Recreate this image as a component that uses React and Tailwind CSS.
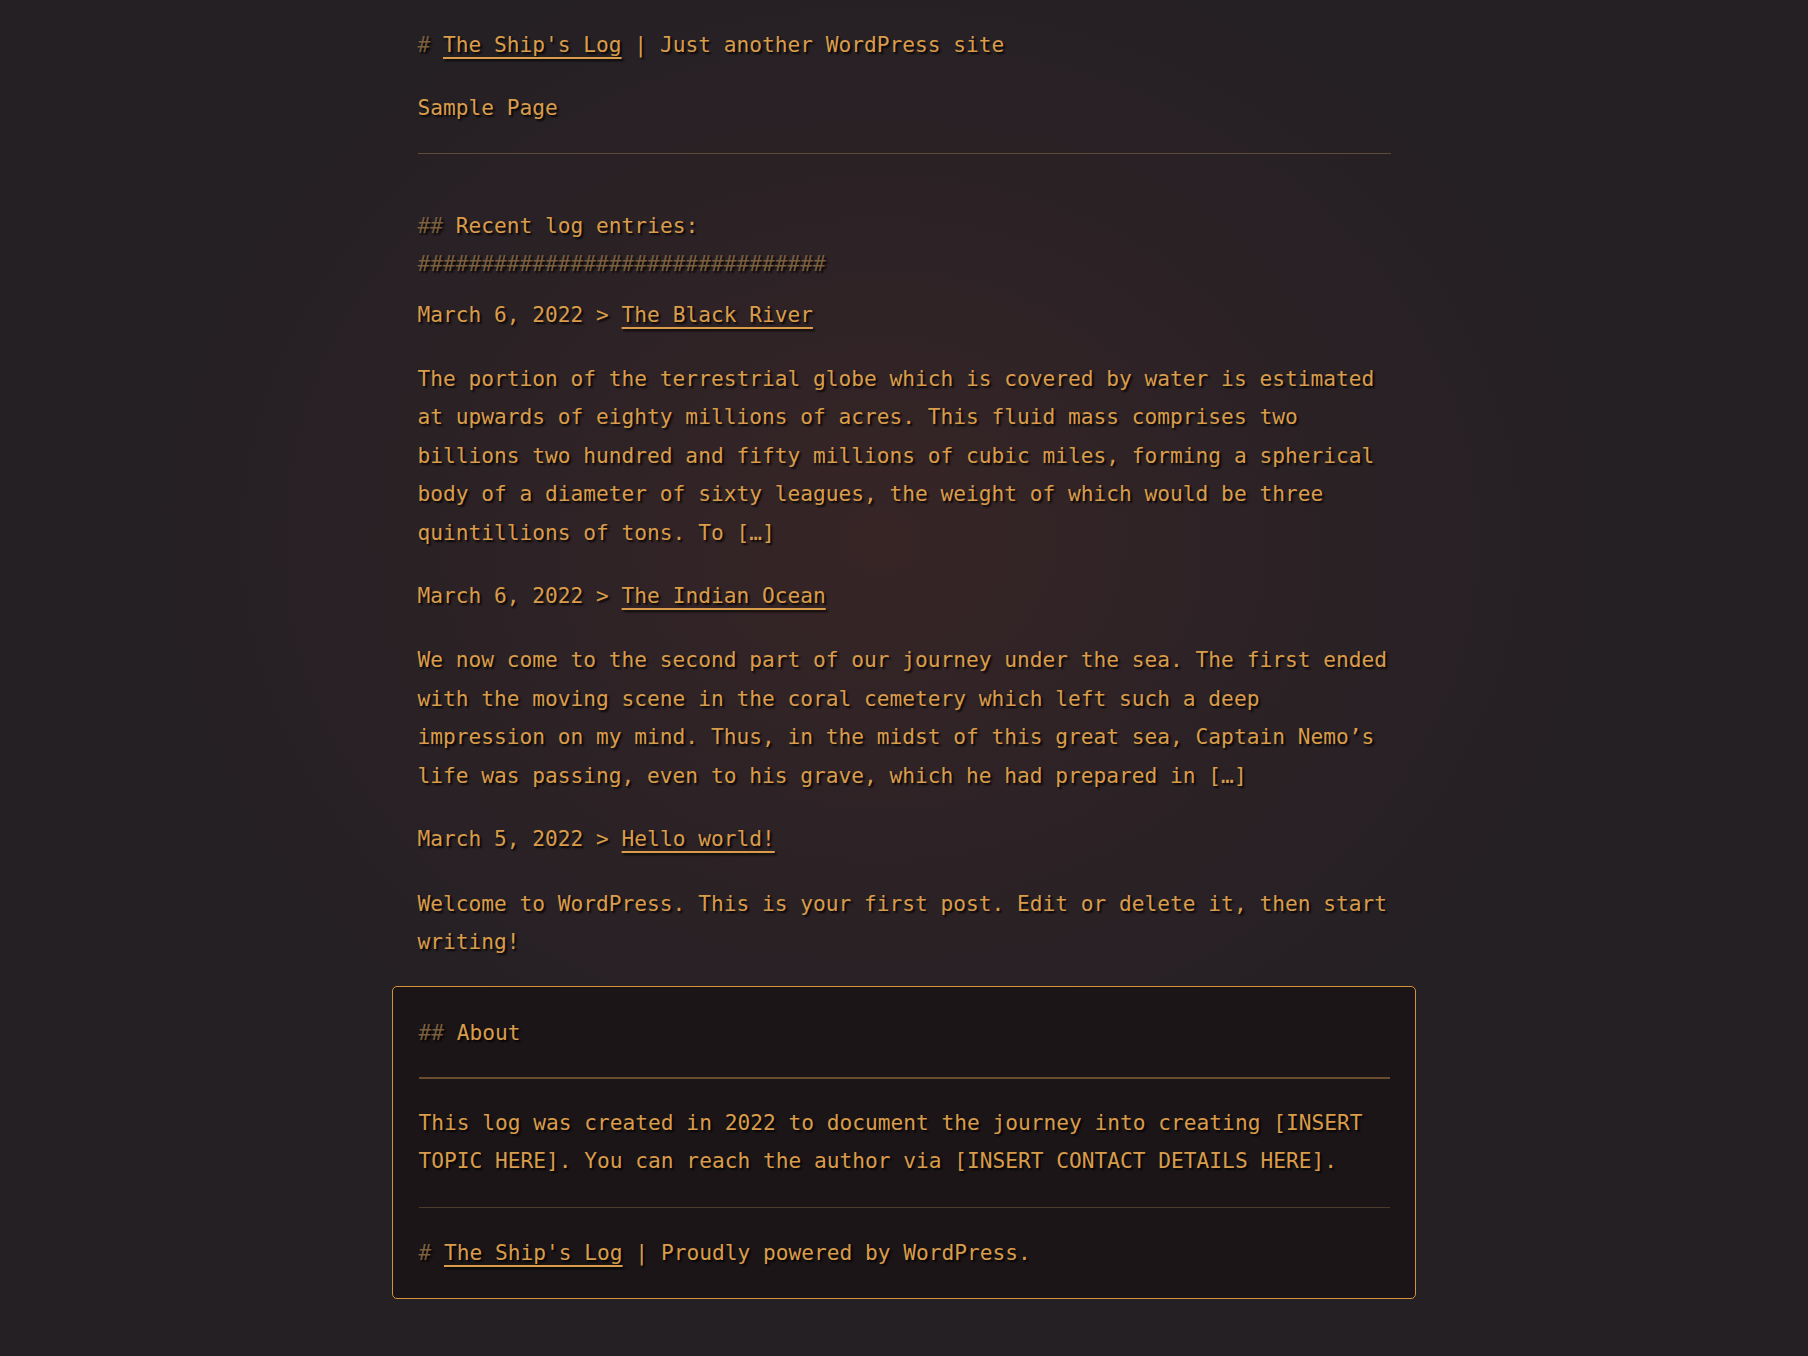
const posts = [
  {
    date: "March 6, 2022",
    title: "The Black River",
    excerpt:
      "The portion of the terrestrial globe which is covered by water is estimated at upwards of eighty millions of acres. This fluid mass comprises two billions two hundred and fifty millions of cubic miles, forming a spherical body of a diameter of sixty leagues, the weight of which would be three quintillions of tons. To […]",
  },
  {
    date: "March 6, 2022",
    title: "The Indian Ocean",
    excerpt:
      "We now come to the second part of our journey under the sea. The first ended with the moving scene in the coral cemetery which left such a deep impression on my mind. Thus, in the midst of this great sea, Captain Nemo’s life was passing, even to his grave, which he had prepared in […]",
  },
  {
    date: "March 5, 2022",
    title: "Hello world!",
    excerpt:
      "Welcome to WordPress. This is your first post. Edit or delete it, then start writing!",
  },
];

const link = "underline decoration-2 underline-offset-[5px] cursor-pointer";

export default function App() {
  return (
    <div className="min-h-screen bg-[#252024] bg-[radial-gradient(ellipse_720px_600px_at_880px_540px,#372526_0%,#2d2226_50%,#252024_100%)] font-['DejaVu_Sans_Mono','Liberation_Mono',monospace] text-[21.2px] leading-[38.4px] text-[#d99c4a] [text-shadow:2px_2px_2px_rgba(0,0,0,0.85)]">
      <div className="w-[973px] mx-auto pt-[26px] pb-[57px]">
        <header>
          <p>
            <span className="text-[#7a5e3e]"># </span>
            <a className={link}>The Ship's Log</a> | Just another WordPress site
          </p>
          <nav className="mt-[25px]">
            <a className="cursor-pointer">Sample Page</a>
          </nav>
          <hr className="mt-[25px] border-0 border-t border-[#5f4b38]" />
        </header>

        <main className="mt-[53px]">
          <h2>
            <span className="text-[#7a5e3e]">## </span>Recent log entries:
          </h2>
          <p className="text-[#7a5e3e]">################################</p>

          <div className="mt-[12px]">
            {posts.map((p) => (
              <article key={p.title} className="mb-[25px]">
                <p>
                  {p.date} &gt; <a className={link}>{p.title}</a>
                </p>
                <p className="mt-[26px]">{p.excerpt}</p>
              </article>
            ))}
          </div>
        </main>

        <footer className="-ml-[26px] -mr-[25px] border border-[#d4923a] rounded-[5px] bg-[#1b1518] pl-[26px] pr-[25px] pt-[27px] pb-[26px]">
          <h2>
            <span className="text-[#7a5e3e]">## </span>About
          </h2>
          <hr className="mt-[24px] border-0 border-t-2 border-[#6a4d2e]" />
          <p className="mt-[25px]">
            This log was created in 2022 to document the journey into creating [INSERT TOPIC HERE]. You can reach the author via [INSERT CONTACT DETAILS HERE].
          </p>
          <hr className="mt-[26px] border-0 border-t border-[#4e3a2a]" />
          <p className="mt-[26px]">
            <span className="text-[#7a5e3e]"># </span>
            <a className={link}>The Ship's Log</a> | Proudly powered by WordPress.
          </p>
        </footer>
      </div>
    </div>
  );
}
